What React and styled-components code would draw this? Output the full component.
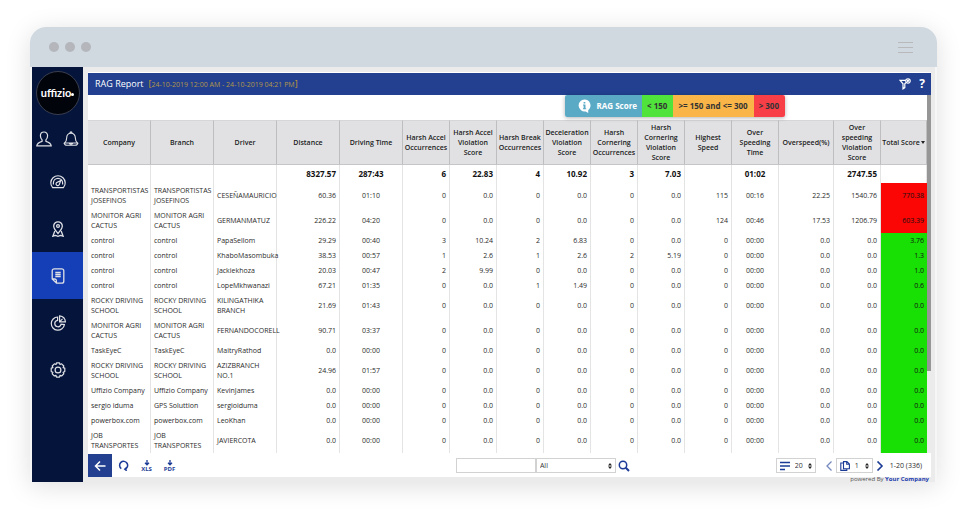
import React, { useState } from "react";
import styled, { createGlobalStyle } from "styled-components";

const columns = [
  { label: "Company", width: 63, align: "left" },
  { label: "Branch", width: 63, align: "left" },
  { label: "Driver", width: 63, align: "left" },
  { label: "Distance", width: 63 },
  { label: "Driving Time", width: 63, align: "center" },
  { label: "Harsh Accel Occurrences", width: 47 },
  { label: "Harsh Accel Violation Score", width: 47 },
  { label: "Harsh Break Occurrences", width: 47 },
  { label: "Deceleration Violation Score", width: 47 },
  { label: "Harsh Cornering Occurrences", width: 47 },
  { label: "Harsh Cornering Violation Score", width: 47 },
  { label: "Highest Speed", width: 47 },
  { label: "Over Speeding Time", width: 47, align: "center" },
  { label: "Overspeed(%)", width: 55 },
  { label: "Over speeding Violation Score", width: 47 },
  { label: "Total Score", width: 46, sorted: true }
];

const totals = ["", "", "", "8327.57", "287:43", "6", "22.83", "4", "10.92", "3", "7.03", "", "01:02", "", "2747.55", ""];

const idle = ["0", "0.0", "0", "0.0", "0", "0.0", "0", "00:00", "0.0", "0.0", "0.0"];

const rows = [
  ["TRANSPORTISTAS JOSEFINOS", "TRANSPORTISTAS JOSEFINOS", "CESEÑAMAURICIO", "60.36", "01:10", "0", "0.0", "0", "0.0", "0", "0.0", "115", "00:16", "22.25", "1540.76", "770.38"],
  ["MONITOR AGRI CACTUS", "MONITOR AGRI CACTUS", "GERMANMATUZ", "226.22", "04:20", "0", "0.0", "0", "0.0", "0", "0.0", "124", "00:46", "17.53", "1206.79", "603.39"],
  ["control", "control", "PapaSellom", "29.29", "00:40", "3", "10.24", "2", "6.83", "0", "0.0", "0", "00:00", "0.0", "0.0", "3.76"],
  ["control", "control", "KhaboMasombuka", "38.53", "00:57", "1", "2.6", "1", "2.6", "2", "5.19", "0", "00:00", "0.0", "0.0", "1.3"],
  ["control", "control", "Jackiekhoza", "20.03", "00:47", "2", "9.99", "0", "0.0", "0", "0.0", "0", "00:00", "0.0", "0.0", "1.0"],
  ["control", "control", "LopeMkhwanazi", "67.21", "01:35", "0", "0.0", "1", "1.49", "0", "0.0", "0", "00:00", "0.0", "0.0", "0.6"],
  ["ROCKY DRIVING SCHOOL", "ROCKY DRIVING SCHOOL", "KILINGATHIKA BRANCH", "21.69", "01:43", ...idle],
  ["MONITOR AGRI CACTUS", "MONITOR AGRI CACTUS", "FERNANDOCORELL", "90.71", "03:37", ...idle],
  ["TaskEyeC", "TaskEyeC", "MaitryRathod", "0.0", "00:00", ...idle],
  ["ROCKY DRIVING SCHOOL", "ROCKY DRIVING SCHOOL", "AZIZBRANCH NO.1", "24.96", "01:57", ...idle],
  ["Uffizio Company", "Uffizio Company", "KevinJames", "0.0", "00:00", ...idle],
  ["sergio iduma", "GPS Soluttion", "sergioiduma", "0.0", "00:00", ...idle],
  ["powerbox.com", "powerbox.com", "LeoKhan", "0.0", "00:00", ...idle],
  ["JOB TRANSPORTES", "JOB TRANSPORTES", "JAVIERCOTA", "0.0", "00:00", ...idle]
];

const scoreColor = score => {
  if (score > 300) {
    return "#fb0505";
  } else if (score >= 150) {
    return "#f9b445";
  }
  return "#18e005";
};

const UserIcon = () => (
  <Icon size={16} strokeWidth={1.2} viewBox="0 0 16 16">
    <path d="M8 1C5.700 1 4.400 2.600 4.400 4.800c0 2 .6 3.100 1.700 4.100v1.400c-2.600.8-5 1.500-5.300 4.500h14.400c-.3-3-2.700-3.700-5.300-4.500V8.900c1.100-1 1.700-2.100 1.700-4.100C11.600 2.600 10.300 1 8 1z" />
  </Icon>
);

const BellIcon = () => (
  <Icon size={16} strokeWidth={1.1} viewBox="0 0 16 16">
    <path d="M8 2.200c-2.800 0-4.300 2-4.300 4.500 0 2.600-.4 3.700-2.200 5.300h13c-1.800-1.600-2.200-2.700-2.200-5.300 0-2.500-1.500-4.500-4.300-4.500zM7 2.200c0-1.900 2-1.900 2 0M1.500 12c-.3 1.500 1 2.300 2.500 2.300h8c1.500 0 2.800-.8 2.500-2.300M6 12c.3 1.500 3.700 1.500 4 0" />
  </Icon>
);

const GaugeIcon = () => (
  <Icon size={16} strokeWidth={1.2} viewBox="0 0 16 16">
    <path d="M2.600 13.700a7.200 7.200 0 1 1 10.800 0zM3.400 10.500V9a4.600 4.600 0 0 1 9.200 0v1.500M10.700 6.600 6.800 8.500a1.700 1.700 0 1 0 2.400 2.300z" />
  </Icon>
);

const PinIcon = () => (
  <Icon size={16} strokeWidth={1.3} viewBox="0 0 16 16">
    <path d="M8 12.500C5.600 9.500 3.700 7.700 3.700 5A4.200 4.200 0 0 1 8 .8 4.200 4.200 0 0 1 12.300 5c0 2.700-1.900 4.500-4.300 7.500z" />
    <circle cx="8" cy="5" r="1.400" />
    <path d="M4.800 10 2.900 15.200l2.600-.8 2.500.9 2.500-.9 2.600.8L11.200 10" />
  </Icon>
);

const ReportIcon = () => (
  <Icon size={16} strokeWidth={1.3} viewBox="0 0 16 16">
    <path d="M4.200.8h7.600a2 2 0 0 1 2 2v10.400a2 2 0 0 1-2 2H6.500L2.200 11V2.800a2 2 0 0 1 2-2zM2.400 11h2.300a1.700 1.700 0 0 1 1.700 1.700v2.300M5.300 4.500h5.400M5.300 6.500h5.400M5.300 8.500h5.400" />
  </Icon>
);

const PieIcon = () => (
  <Icon size={16} strokeWidth={1.2} viewBox="0 0 16 16">
    <path d="M7.600 2a6.600 6.600 0 1 0 6.800 7.600l-3.300-.4A3.200 3.200 0 1 1 7.600 5.400zM9.600.8v6h5.800C15.200 3.600 13 1.200 9.600.8zM9.600 6.800l2.900-3" />
  </Icon>
);

const GearIcon = () => (
  <Icon size={16} strokeWidth={1.2} viewBox="0 0 16 16">
    <path strokeLinejoin="round" d="M6.500.8h3l.5 1.700 1.600-.7 2.200 2.200-.7 1.600 1.700.5v3.500l-1.700.6.7 1.600-2.200 2.200-1.600-.7-.5 1.800h-3L6 13.300l-1.600.7-2.200-2.200.7-1.600-1.700-.6V6.100l1.700-.5-.7-1.600 2.200-2.200 1.600.7z" />
    <circle cx="8" cy="8" r="2.900" />
  </Icon>
);

const ExportIcon = () => (
  <Icon size={6} strokeWidth={1.3} viewBox="0 0 6 6">
    <path d="M3 0v4.500M1 2.800l2 2 2-2" />
  </Icon>
);

const Arrows = () => (
  <ArrowsSvg viewBox="0 0 4 6" aria-hidden="true">
    <path d="M2 0 4 2.400H0zM2 6 0 3.600h4z" />
  </ArrowsSvg>
);

const nav = [
  { label: "Dashboard", icon: GaugeIcon },
  { label: "Tracking", icon: PinIcon },
  { label: "Reports", icon: ReportIcon },
  { label: "Charts", icon: PieIcon },
  { label: "Settings", icon: GearIcon }
];

export default function App() {
  const [active, setActive] = useState("Reports");
  const [search, setSearch] = useState("");

  return (
    <>
      <GlobalStyle />
      <Browser>
        <BrowserBar>
          <Dots>
            <Dot />
            <Dot />
            <Dot />
          </Dots>
          <Burger>
            <BurgerLine />
            <BurgerLine />
            <BurgerLine />
          </Burger>
        </BrowserBar>
        <Layout>
          <Sidebar>
            <Logo>
              uffizio
              <LogoDot />
            </Logo>
            <UserBar>
              <IconButton aria-label="Account"><UserIcon /></IconButton>
              <IconButton aria-label="Alerts"><BellIcon /></IconButton>
            </UserBar>
            {nav.map(({ label, icon: NavIcon }) => (
              <NavButton
                key={label}
                aria-label={label}
                $active={active === label}
                onClick={() => setActive(label)}
              >
                <NavIcon />
              </NavButton>
            ))}
          </Sidebar>
          <Main>
            <Header>
              <Title>RAG Report</Title>
              <Period>
                <Bracket>[</Bracket>24-10-2019 12:00 AM - 24-10-2019 04:21 PM<Bracket>]</Bracket>
              </Period>
              <HeaderTools>
                <IconButton aria-label="Filter">
                  <Icon size={12} strokeWidth={1.2} viewBox="0 0 12 12">
                    <path d="M6.800 2.300H1l3 3.500v5l1.800-1.200V5.800l1.500-1.500" />
                    <circle cx="9" cy="3" r="2.200" />
                    <path d="m8.200 2.200 1.600 1.600M9.800 2.200 8.200 3.800" />
                  </Icon>
                </IconButton>
                <HelpButton>?</HelpButton>
              </HeaderTools>
            </Header>
            <Content>
              <Report>
                <LegendBar>
                  <Legend>
                    <LegendTitle>
                      <svg width="13" height="14" viewBox="0 0 13 14" aria-hidden="true">
                        <path fill="#fff" d="M6.500.5a6 6 0 0 1 3.700 10.700V14l-2.500-1.600A6 6 0 1 1 6.500.5z" />
                        <path fill="#5aaac6" d="M5.500 5.500h2v3.700h.7v1H5v-1h.6V6.500H5v-1zM5.600 3h1.700v1.600H5.600z" />
                      </svg>
                      RAG Score
                    </LegendTitle>
                    <LegendItem $color="#50e33c">&lt; 150</LegendItem>
                    <LegendItem $color="#f9b547">&gt;= 150 and &lt;= 300</LegendItem>
                    <LegendItem $color="#f83f48">&gt; 300</LegendItem>
                  </Legend>
                </LegendBar>
                <Table>
                  <colgroup>
                    {columns.map(col => (
                      <Col key={col.label} $width={col.width} />
                    ))}
                  </colgroup>
                  <thead>
                    <tr>
                      {columns.map(col => (
                        <HeadCell key={col.label} $sorted={col.sorted} scope="col">
                          {col.label}
                          {col.sorted && <SortArrow />}
                        </HeadCell>
                      ))}
                    </tr>
                  </thead>
                  <tbody>
                    <tr>
                      {totals.map((value, i) => (
                        <TotalCell key={i} $align={columns[i].align}>{value}</TotalCell>
                      ))}
                    </tr>
                    {rows.map((row, r) => (
                      <tr key={r}>
                        {row.map((value, i) =>
                          columns[i].sorted ? (
                            <ScoreCell key={i} $color={scoreColor(Number(value))}>{value}</ScoreCell>
                          ) : (
                            <Cell key={i} $align={columns[i].align}>{value}</Cell>
                          )
                        )}
                      </tr>
                    ))}
                  </tbody>
                </Table>
              </Report>
              <Track>
                <Thumb />
              </Track>
            </Content>
            <Toolbar>
              <Actions>
                <BackButton aria-label="Back">
                  <Icon size={12} strokeWidth={1.500} viewBox="0 0 12 12">
                    <path d="M11.500 6H1.500M6 1.500 1.500 6 6 10.500" />
                  </Icon>
                </BackButton>
                <ToolButton aria-label="Refresh">
                  <Icon size={11} strokeWidth={1.500} viewBox="0 0 11 11">
                    <path d="M3.300 8.600A4 4 0 1 1 7 9.100M8.800 7.200 6.800 9.100l2 1.600" />
                  </Icon>
                </ToolButton>
                <ToolButton><ExportIcon />XLS</ToolButton>
                <ToolButton><ExportIcon />PDF</ToolButton>
              </Actions>
              <Search>
                <SearchInput
                  aria-label="Search"
                  value={search}
                  onChange={e => setSearch(e.target.value)}
                />
                <Picker $width={80}>
                  <Select aria-label="Search in" defaultValue="All">
                    <option>All</option>
                    <option>Company</option>
                  </Select>
                  <Arrows />
                </Picker>
                <IconButton aria-label="Run search">
                  <Icon size={12} strokeWidth={1.500} viewBox="0 0 12 12">
                    <circle cx="5" cy="5" r="3.700" />
                    <path strokeWidth="2" d="m7.800 7.800 3.200 3.200" />
                  </Icon>
                </IconButton>
              </Search>
              <Pager>
                <Picker $width={40}>
                  <Icon size={10} strokeWidth={1.500} viewBox="0 0 10 10">
                    <path d="M0 1.500h10M0 5h10M0 8.500h5" />
                  </Icon>
                  <Select aria-label="Rows per page" defaultValue="20">
                    <option>20</option>
                    <option>50</option>
                  </Select>
                  <Arrows />
                </Picker>
                <PageButton aria-label="Previous page" disabled>
                  <Icon size={10} strokeWidth={1.300} viewBox="0 0 10 10">
                    <path d="M7.500.5 3 5l4.500 4.500" />
                  </Icon>
                </PageButton>
                <Picker $width={37}>
                  <Icon size={10} strokeWidth={1.100} viewBox="0 0 10 10">
                    <path d="M3.500.6h3.400l2.500 2.500v4.700H3.500zM6.700.8v2.500h2.500M3.300 2H.8v7.400h6V8" />
                  </Icon>
                  <Select aria-label="Page" defaultValue="1">
                    <option>1</option>
                    <option>2</option>
                  </Select>
                  <Arrows />
                </Picker>
                <PageButton aria-label="Next page">
                  <Icon size={10} strokeWidth={1.600} viewBox="0 0 10 10">
                    <path d="M2.500.5 7 5 2.500 9.500" />
                  </Icon>
                </PageButton>
                <Range>1-20 (336)</Range>
              </Pager>
            </Toolbar>
            <Credit>
              powered By <CreditLink href="#">Your Company</CreditLink>
            </Credit>
          </Main>
        </Layout>
      </Browser>
    </>
  );
}

const GlobalStyle = createGlobalStyle`
  * {
    box-sizing: border-box;
  }
  body {
    margin: 0;
    padding: 27px 33px 27px 30px;
    background: #fff;
    color: #2b2b2b;
    font-family: "Open Sans", "Noto Sans", sans-serif;
    font-size: 7px;
    line-height: 10px;
  }
  button, input, select {
    margin: 0;
    padding: 0;
    border: 0;
    background: none;
    color: inherit;
    font: inherit;
  }
  button {
    cursor: pointer;
  }
`;
const Browser = styled.div`
  border-radius: 16px 16px 0 0;
  box-shadow: 0 4px 26px rgba(0, 0, 0, 0.13);
`;
const BrowserBar = styled.div`
  display: flex;
  align-items: center;
  justify-content: space-between;
  height: 40px;
  padding: 0 24px 0 19px;
  border-radius: 16px 16px 0 0;
  background: #d0d9e0;
`;
const Dots = styled.div`
  display: flex;
  gap: 6px;
`;
const Dot = styled.span`
  width: 10px;
  height: 10px;
  border-radius: 50%;
  background: #b4b6bc;
`;
const Burger = styled.div`
  display: grid;
  gap: 4px;
`;
const BurgerLine = styled.span`
  width: 15px;
  height: 1px;
  background: #b9b9bc;
`;
const Layout = styled.div`
  display: flex;
  padding: 0 2px;
  background: #f6f6f6;
`;
const Sidebar = styled.nav`
  display: flex;
  flex-direction: column;
  flex: none;
  width: 51px;
  padding-top: 4px;
  background: #05143b;
  color: #dfe1e6;
`;
const Logo = styled.div`
  display: flex;
  align-items: center;
  justify-content: center;
  align-self: center;
  width: 44px;
  height: 44px;
  border: 1px solid #3a3f4e;
  border-radius: 50%;
  background: #02040c;
  color: #fff;
  font-family: Lato, sans-serif;
  font-size: 11px;
  font-weight: bold;
`;
const LogoDot = styled.span`
  width: 3px;
  height: 3px;
  margin-top: 2px;
  border-radius: 50%;
  background: #fff;
`;
const UserBar = styled.div`
  display: flex;
  align-items: center;
  justify-content: space-between;
  height: 43px;
  padding: 5px 4px 0;
`;
const IconButton = styled.button`
  display: flex;
`;
const Icon = styled.svg.attrs(({ size, strokeWidth }) => ({
  width: size,
  height: size,
  fill: "none",
  stroke: "currentColor",
  strokeWidth: strokeWidth || 1,
  "aria-hidden": true
}))`
  flex: none;
`;
const NavButton = styled.button`
  display: flex;
  align-items: center;
  justify-content: center;
  height: 47px;
  background: ${({ $active }) => ($active ? "#143fb6" : "transparent")};
`;
const Main = styled.main`
  flex: 1;
  min-width: 0;
  padding: 5px 4px 0 5px;
  background: #ebebeb;
`;
const Header = styled.header`
  display: flex;
  align-items: center;
  height: 23px;
  padding: 0 6px 0 7px;
  border-top: 1px solid #fff;
  background: #22408f;
  color: #fff;
`;
const Title = styled.h1`
  margin: 0;
  font-size: 9px;
  font-weight: normal;
`;
const Period = styled.span`
  margin-left: 5px;
  color: #b3974b;
`;
const Bracket = styled.span`
  color: #d49b2c;
  font-size: 9px;
`;
const HeaderTools = styled.div`
  display: flex;
  align-items: center;
  gap: 8px;
  margin-left: auto;
`;
const HelpButton = styled.button`
  font-size: 12px;
  font-weight: bold;
`;
const Content = styled.div`
  display: flex;
  background: #fff;
`;
const Report = styled.section`
  flex: 1;
  min-width: 0;
`;
const Track = styled.div`
  flex: none;
  width: 4px;
  background: #ebebeb;
`;
const Thumb = styled.div`
  height: 77%;
  background: #969696;
`;
const LegendBar = styled.div`
  display: flex;
  justify-content: flex-end;
  height: 25px;
  padding: 0 142px 3px 0;
`;
const Legend = styled.div`
  display: flex;
  border-radius: 2px;
  overflow: hidden;
  box-shadow: 0 1px 4px rgba(0, 0, 0, 0.3);
  font-size: 8px;
  font-weight: bold;
`;
const LegendTitle = styled.div`
  display: flex;
  align-items: center;
  gap: 6px;
  padding: 0 5px 0 13px;
  background: #5aaac6;
  color: #fff;
`;
const LegendItem = styled.div`
  display: flex;
  align-items: center;
  padding: 0 6px 0 5px;
  background: ${({ $color }) => $color};
  color: #333;
`;
const Table = styled.table`
  width: 100%;
  table-layout: fixed;
  border-collapse: separate;
  border-spacing: 0;
`;
const Col = styled.col`
  width: ${({ $width }) => $width}px;
`;
const HeadCell = styled.th`
  height: 45px;
  padding: 0;
  border-top: 1px solid #d6d6d8;
  border-right: 1px solid #bebec0;
  border-bottom: 1px solid #c6c6c8;
  background: #e1e1e4;
  color: #222;
  font-weight: 600;
  white-space: ${({ $sorted }) => ($sorted ? "nowrap" : "normal")};
`;
const SortArrow = styled.span`
  display: inline-block;
  margin-left: 1px;
  vertical-align: middle;
  border: 2px solid transparent;
  border-top: 3px solid #222;
  border-bottom: 0;
`;
const Cell = styled.td`
  height: 15px;
  padding: ${({ $align }) => ($align === "left" ? "3px 0 2px 3px" : "3px 3px 2px")};
  border-right: 1px solid #e4e4e4;
  text-align: ${({ $align }) => $align || "right"};
  vertical-align: middle;
`;
const TotalCell = styled(Cell)`
  height: 18px;
  padding: 2px 3px 3px;
  color: #111;
  font-size: 8px;
  font-weight: bold;
`;
const ScoreCell = styled(Cell)`
  border-right: 0;
  background: ${({ $color }) => $color};
  color: #111;
`;
const Toolbar = styled.footer`
  display: grid;
  grid-template-columns: 11fr auto 9fr;
  align-items: center;
  height: 24px;
  padding-top: 1px;
  background: #fff;
`;
const Actions = styled.div`
  display: flex;
  align-self: stretch;
  color: #1c3b96;
`;
const BackButton = styled.button`
  display: flex;
  align-items: center;
  justify-content: center;
  width: 24px;
  background: #22408f;
  color: #fff;
`;
const ToolButton = styled.button`
  display: flex;
  flex-direction: column;
  align-items: center;
  justify-content: center;
  width: 23px;
  font-size: 6px;
  font-weight: bold;
  line-height: 6px;
`;
const Search = styled.div`
  display: flex;
  align-items: center;
  color: #1c3b96;
  ${IconButton} {
    margin-left: 2px;
  }
`;
const SearchInput = styled.input`
  width: 80px;
  height: 15px;
  padding: 0 3px;
  border: 1px solid #d2d2d2;
`;
const Picker = styled.label`
  display: flex;
  align-items: center;
  gap: 5px;
  width: ${({ $width }) => $width}px;
  height: 15px;
  padding: 0 3px;
  border: 1px solid #d2d2d2;
  color: #1c3b96;
`;
const Select = styled.select`
  flex: 1;
  min-width: 0;
  appearance: none;
  color: #333;
`;
const ArrowsSvg = styled.svg`
  flex: none;
  width: 4px;
  height: 6px;
  fill: #222;
`;
const Pager = styled.div`
  display: flex;
  align-items: center;
  justify-content: flex-end;
  padding-right: 9px;
`;
const PageButton = styled.button`
  display: flex;
  align-items: center;
  padding: 0 2px;
  color: #1c3b96;
  &:disabled {
    padding-left: 8px;
    opacity: 0.6;
  }
`;
const Range = styled.span`
  margin-left: 3px;
`;
const Credit = styled.div`
  height: 5px;
  padding-right: 2px;
  color: #555;
  font-size: 6px;
  line-height: 5px;
  text-align: right;
`;
const CreditLink = styled.a`
  color: #1f3fb0;
  font-weight: bold;
  text-decoration: none;
`;
